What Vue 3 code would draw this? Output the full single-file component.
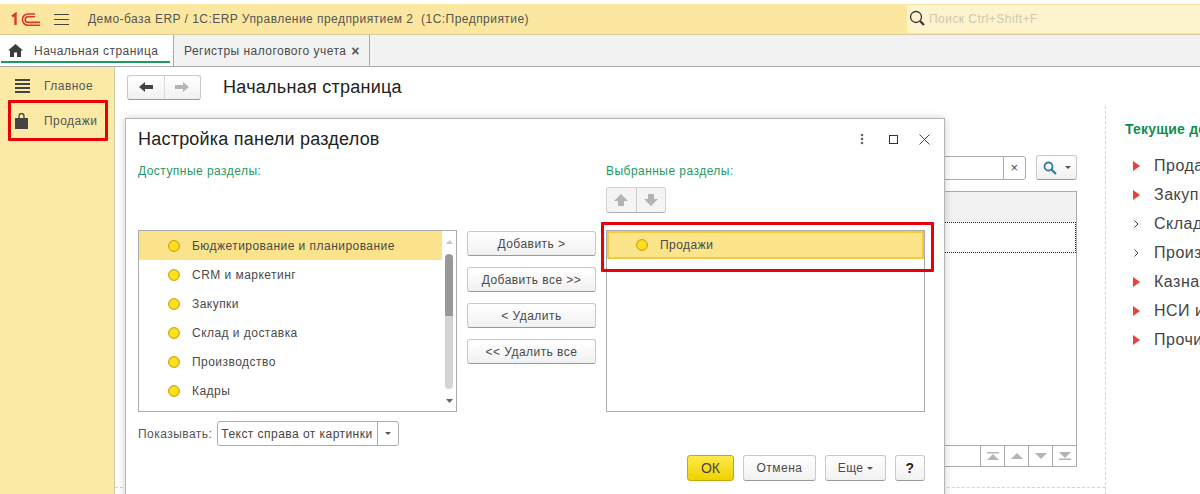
<script setup>
const available = ['Бюджетирование и планирование', 'CRM и маркетинг', 'Закупки', 'Склад и доставка', 'Производство', 'Кадры']
const moves = ['Добавить >', 'Добавить все >>', '< Удалить', '<< Удалить все']
const links = [
  { t: 'Продажи', red: true }, { t: 'Закупки', red: true }, { t: 'Склад и доставка', red: false },
  { t: 'Производство', red: false }, { t: 'Казначейство', red: true }, { t: 'НСИ и администрирование', red: true }, { t: 'Прочие', red: true }
]
</script>

<template>
  <div class="page">
    <header class="top">
      <svg class="logo" width="30" height="15" viewBox="0 0 30 15" fill="none" stroke="#d8392b">
        <path d="M1 4.5 L4.5 2 V13" stroke-width="2.4" />
        <path d="M29 13.2 H17 A5.6 5.6 0 0 1 17 2 H24" stroke-width="1.6" />
        <path d="M29 10.4 H17 A2.8 2.8 0 0 1 17 4.8 H24" stroke-width="1.6" />
      </svg>
      <svg class="burger" width="15" height="12" viewBox="0 0 15 12" stroke="#444"><path d="M0 1.5H15M0 6.5H15M0 11.5H15" /></svg>
      <span class="app-title">Демо-база ERP / 1С:ERP Управление предприятием 2&nbsp; (1С:Предприятие)</span>
      <div class="search">
        <svg width="17" height="17" viewBox="0 0 17 17" fill="none" stroke="#333"><circle cx="7" cy="7" r="5.5" stroke-width="1.3" /><path d="M11 11l4 4" stroke-width="2.2" /></svg>
        <span>Поиск Ctrl+Shift+F</span>
      </div>
    </header>

    <nav class="tabs">
      <div class="tab home">
        <svg width="15" height="13" viewBox="0 0 15 13" fill="#3c3c3c"><path d="M7.5 0 L15 6.6 H13 V13 H9 V8.5 H6 V13 H2 V6.6 H0 Z" /></svg>
        <span>Начальная страница</span>
      </div>
      <div class="tab second"><span>Регистры налогового учета</span><b>×</b></div>
    </nav>

    <div class="body">
      <aside class="side">
        <div class="side-item">
          <svg width="15" height="15" viewBox="0 0 15 15" stroke="#444" stroke-width="2"><path d="M0 2H15M0 6H15M0 10H15M0 14H15" /></svg>
          <span>Главное</span>
        </div>
        <div class="side-item sales">
          <svg width="13" height="16" viewBox="0 0 13 16"><path d="M0 5H13V16H0Z" fill="#444" /><path d="M4 7V3a2.5 2.5 0 0 1 5 0V7" fill="none" stroke="#444" stroke-width="1.3" /></svg>
          <span>Продажи</span>
        </div>
      </aside>

      <main class="main">
        <section class="work">
          <div class="work-head">
            <div class="nav-btns">
              <button class="nav-cell">
                <svg width="14" height="10" viewBox="0 0 14 10" fill="#444"><path d="M0 5 L6 0 V3 H14 V7 H6 V10 Z" /></svg>
              </button>
              <button class="nav-cell">
                <svg width="14" height="10" viewBox="0 0 14 10" fill="#b5b5b5"><path d="M14 5 L8 0 V3 H0 V7 H8 V10 Z" /></svg>
              </button>
            </div>
            <h1>Начальная страница</h1>
          </div>
          <div class="filter">
            <div class="filter-input"><i>×</i></div>
            <button class="find">
              <svg width="14" height="14" viewBox="0 0 14 14" fill="none" stroke="#2d7ba8"><circle cx="5.5" cy="5.5" r="4" stroke-width="1.8" /><path d="M8.5 8.5l4.5 4.5" stroke-width="2.2" /></svg>
              <em class="caret"></em>
            </button>
          </div>
          <div class="table">
            <div class="table-head"></div>
            <div class="table-row"></div>
            <div class="table-fill"></div>
            <div class="pager">
              <span class="pg"><svg width="12" height="8" viewBox="0 0 12 8" fill="#b5b5b5"><path d="M0 0H12V1.5H0ZM6 2L12 8H0Z" /></svg></span>
              <span class="pg"><svg width="12" height="6" viewBox="0 0 12 6" fill="#b5b5b5"><path d="M6 0L12 6H0Z" /></svg></span>
              <span class="pg"><svg width="12" height="6" viewBox="0 0 12 6" fill="#b5b5b5"><path d="M0 0H12L6 6Z" /></svg></span>
              <span class="pg"><svg width="12" height="8" viewBox="0 0 12 8" fill="#b5b5b5"><path d="M0 0H12L6 6ZM0 6.5H12V8H0Z" /></svg></span>
            </div>
          </div>
        </section>
        <section class="right">
          <h2>Текущие дела</h2>
          <ul>
            <li v-for="l in links" :key="l.t">
              <svg v-if="l.red" width="7" height="10" viewBox="0 0 7 10" fill="#ea4335"><path d="M0 0L7 5L0 10Z" /></svg>
              <svg v-else width="7" height="10" viewBox="0 0 7 10" fill="none" stroke="#444"><path d="M1.5 1.5L5 5L1.5 8.5" /></svg>
              <span>{{ l.t }}</span>
            </li>
          </ul>
        </section>
      </main>
    </div>

    <div class="dialog">
      <div class="dlg-head">
        <span class="dlg-title">Настройка панели разделов</span>
        <div class="dlg-ctrl">
          <svg width="4" height="12" viewBox="0 0 4 12" fill="#666"><circle cx="2" cy="2" r="1.3" /><circle cx="2" cy="6" r="1.3" /><circle cx="2" cy="10" r="1.3" /></svg>
          <svg width="9" height="9" viewBox="0 0 9 9" fill="none" stroke="#333"><rect x=".5" y=".5" width="8" height="8" /></svg>
          <svg width="11" height="11" viewBox="0 0 11 11" fill="none" stroke="#444"><path d="M.5.5l10 10M10.5.5l-10 10" /></svg>
        </div>
      </div>

      <div class="columns">
        <div class="col">
          <div class="label">Доступные разделы:</div>
          <div class="spacer"></div>
          <div class="listbox">
            <div class="rows">
              <div v-for="(a, i) in available" :key="a" class="row" :class="{ active: i === 0 }">
                <span class="dot"></span><span>{{ a }}</span>
              </div>
            </div>
            <div class="scroll">
              <svg width="7" height="4" viewBox="0 0 7 4" fill="#c8c8c8"><path d="M3.5 0L7 4H0Z" /></svg>
              <div class="track"><div class="thumb"></div></div>
              <svg width="7" height="4" viewBox="0 0 7 4" fill="#666"><path d="M0 0H7L3.5 4Z" /></svg>
            </div>
          </div>
          <div class="show">
            <span>Показывать:</span>
            <div class="select"><span class="val">Текст справа от картинки</span><span class="arrow"><em class="caret"></em></span></div>
          </div>
        </div>

        <div class="moves">
          <button v-for="m in moves" :key="m" class="btn">{{ m }}</button>
        </div>

        <div class="col">
          <div class="label">Выбранные разделы:</div>
          <div class="updown">
            <button class="ud"><svg width="14" height="12" viewBox="0 0 14 12" fill="#b3b3b3"><path d="M7 0L14 7H10V12H4V7H0Z" /></svg></button>
            <button class="ud"><svg width="14" height="12" viewBox="0 0 14 12" fill="#b3b3b3"><path d="M7 12L0 5H4V0H10V5H14Z" /></svg></button>
          </div>
          <div class="listbox chosen">
            <div class="row picked"><span class="dot"></span><span>Продажи</span></div>
          </div>
        </div>
      </div>

      <div class="foot">
        <button class="btn ok">ОК</button>
        <button class="btn cancel">Отмена</button>
        <button class="btn more">Еще <em class="caret"></em></button>
        <button class="btn help">?</button>
      </div>

      <div class="mark mark-list"></div>
    </div>

    <div class="mark mark-side"></div>
  </div>
</template>

<style>
html, body { margin: 0; overflow: hidden; background: #fff; }
</style>

<style scoped>
.page {
  position: relative; width: 1200px; height: 494px; overflow: hidden; background: #fff;
  font: 12px "Liberation Sans", Arial, sans-serif; color: #4a4a4a; letter-spacing: .46px;
}
button { font: inherit; letter-spacing: inherit; color: inherit; padding: 0; }
.caret { display: inline-block; width: 0; height: 0; border: 3px solid transparent; border-top: 3px solid #555; border-bottom: 0; vertical-align: middle; }

.top { display: flex; align-items: center; height: 30px; margin-top: 4px; background: #fbe79f; border-bottom: 1px solid #d8cc96; }
.logo { margin-left: 11px; }
.burger { margin-left: 13px; }
.app-title { margin-left: 19px; flex: 1; color: #555; }
.search { display: flex; align-items: center; gap: 3px; width: 293px; height: 28px; padding-left: 2px; box-sizing: border-box; background: #fdf4cd; color: #cfc9ae; margin-top: -1px; }

.tabs { display: flex; background: #f3f2f2; border-bottom: 1px solid #aaa; box-sizing: border-box; height: 32px; }
.tab { display: flex; align-items: center; box-sizing: border-box; color: #4a4a4a; }
.home { position: relative; width: 174px; padding-left: 8px; gap: 11px; background: #fff; border-right: 1px solid #aaa; }
.home::after { content: ""; position: absolute; left: 1px; width: 169px; bottom: 3px; height: 2px; background: #1f9a5a; }
.second { width: 196px; padding-left: 10px; border-right: 1px solid #aaa; gap: 5px; }
.second b { font-size: 14px; color: #555; }

.body { display: flex; height: 428px; }
.side { width: 115px; flex: none; box-sizing: border-box; padding-top: 1px; background: #fbe9a6; border-right: 1px solid #cfc9a8; }
.side-item { display: flex; align-items: center; height: 35px; padding-left: 15px; gap: 14px; color: #555; }
.sales svg { margin-right: 2px; }

.main { flex: 1; display: flex; min-width: 0; }
.work { width: 990px; flex: none; height: 421px; box-sizing: border-box; padding: 8px 28px 0 12px; border-bottom: 1px dashed #d4d4d4; }
.work-head { display: flex; align-items: center; height: 24px; gap: 22px; }
.nav-btns { display: flex; width: 74px; height: 25px; box-sizing: border-box; border: 1px solid #c9c9c9; border-bottom-color: #999; border-radius: 3px; background: linear-gradient(#fff, #f1f1f1); }
.nav-cell { flex: 1; border: 0; background: none; display: flex; align-items: center; justify-content: center; }
.nav-cell + .nav-cell { border-left: 1px solid #d8d8d8; }
h1 { margin: 0; font-size: 18px; font-weight: 400; color: #222; letter-spacing: .26px; }

.filter { display: flex; justify-content: flex-end; align-items: center; gap: 10px; margin-top: 56px; height: 25px; }
.filter-input { width: 160px; height: 24px; box-sizing: border-box; border: 1px solid #aaa; border-radius: 3px; display: flex; justify-content: flex-end; }
.filter-input i { width: 21px; text-align: center; border-left: 1px solid #aaa; font-style: normal; line-height: 21px; font-size: 13px; }
.find { width: 41px; height: 25px; display: flex; align-items: center; justify-content: center; gap: 8px; border: 1px solid #c9c9c9; border-bottom-color: #999; border-radius: 3px; background: linear-gradient(#fff, #f1f1f1); }
.table { display: flex; flex-direction: column; margin-top: 11px; height: 276px; box-sizing: border-box; border: 1px solid #aaa; border-bottom: 0; }
.table-head { height: 30px; background: #f3f2f2; }
.table-row { height: 31px; box-sizing: border-box; border: 1px dotted #222; }
.table-fill { flex: 1; }
.pager { display: flex; justify-content: flex-end; height: 22px; box-sizing: border-box; border-top: 1px solid #aaa; border-bottom: 1px solid #aaa; }
.pg { width: 24px; display: flex; align-items: center; justify-content: center; box-sizing: border-box; border-left: 1px solid #aaa; }

.right { flex: 1; box-sizing: border-box; margin-top: 39px; padding: 15px 0 0 19px; border-left: 1px dashed #d4d4d4; white-space: nowrap; }
h2 { margin: 0; font-size: 14px; line-height: 17px; color: #0f8f4f; letter-spacing: .2px; }
ul { margin: 13px 0 0; padding: 0 0 0 8px; list-style: none; }
li { display: flex; align-items: center; gap: 14px; height: 29px; font-size: 16px; color: #444; letter-spacing: .5px; }

.dialog { position: absolute; left: 125px; top: 118px; width: 820px; height: 390px; box-sizing: border-box; background: #fff; border: 1px solid #b5b5b5; box-shadow: 0 0 8px rgba(0,0,0,.2); padding: 0 18px 0 12px; }
.dlg-head { display: flex; justify-content: space-between; align-items: center; height: 40px; }
.dlg-title { font-size: 18px; color: #222; letter-spacing: .22px; }
.dlg-ctrl { display: flex; align-items: center; gap: 21px; margin-right: -4px; }
.dlg-ctrl svg:first-child { margin-right: 4px; }

.columns { display: flex; align-items: flex-start; }
.col { width: 319px; flex: none; }
.label { height: 28px; line-height: 24px; color: #1f9a5f; }
.spacer { height: 43px; }
.listbox { display: flex; height: 182px; box-sizing: border-box; border: 1px solid #aaa; }
.rows { flex: 1; min-width: 0; }
.row { display: flex; align-items: center; height: 29px; padding-left: 29px; gap: 12px; color: #4a4a4a; }
.row.active { background: #fbe38c; }
.dot { width: 12px; height: 12px; box-sizing: border-box; border-radius: 50%; background: radial-gradient(circle, #ffe01a 55%, #e8c520 70%); border: 1px solid #c9a815; flex: none; }
.scroll { width: 14px; display: flex; flex-direction: column; align-items: center; padding: 9px 0 8px; box-sizing: border-box; }
.track { flex: 1; width: 8px; margin: 10px 0; }
.thumb { height: 100%; border-radius: 4px; background: linear-gradient(#999 46%, #d4d4d4 46%); }

.show { display: flex; align-items: center; gap: 5px; margin-top: 9px; color: #555; }
.select { display: flex; width: 182px; height: 25px; box-sizing: border-box; border: 1px solid #aaa; border-radius: 3px; color: #444; align-items: center; }
.val { flex: 1; padding-left: 3px; white-space: nowrap; }
.arrow { width: 20px; height: 100%; border-left: 1px solid #aaa; display: flex; align-items: center; justify-content: center; }

.moves { width: 129px; flex: none; margin: 72px 10px 0; display: flex; flex-direction: column; gap: 11px; }
.btn { height: 25px; box-sizing: border-box; border: 1px solid #c9c9c9; border-bottom-color: #999; border-radius: 3px; background: linear-gradient(#fff, #f1f1f1); color: #4a4a4a; white-space: nowrap; }
.updown { display: flex; width: 60px; height: 26px; margin-bottom: 17px; box-sizing: border-box; border: 1px solid #d4d4d4; border-bottom-color: #aaa; border-radius: 3px; background: #f4f4f4; }
.ud { flex: 1; border: 0; background: none; display: flex; align-items: center; justify-content: center; }
.ud + .ud { border-left: 1px solid #ccc; }
.chosen { display: block; }
.picked { height: 28px; padding-left: 27px; box-sizing: border-box; background: #fce48a; border: 2px solid #f5ca3c; }

.foot { display: flex; justify-content: flex-end; gap: 9px; margin: 9px 1px 0 0; }
.foot .btn { height: 26px; }
.ok { width: 47px; border-color: #c9a900; background: linear-gradient(#ffe94a, #eed200); color: #444; font-size: 14px; letter-spacing: 0; }
.cancel { width: 73px; }
.more { width: 61px; }
.help { width: 30px; font-size: 14px; color: #222; font-weight: 700; }

.mark { position: absolute; box-sizing: border-box; border: 3px solid #e8000b; border-radius: 1px; }
.mark-side { left: 8px; top: 100px; width: 100px; height: 41px; }
.mark-list { left: 475px; top: 103px; width: 333px; height: 50px; }
</style>
